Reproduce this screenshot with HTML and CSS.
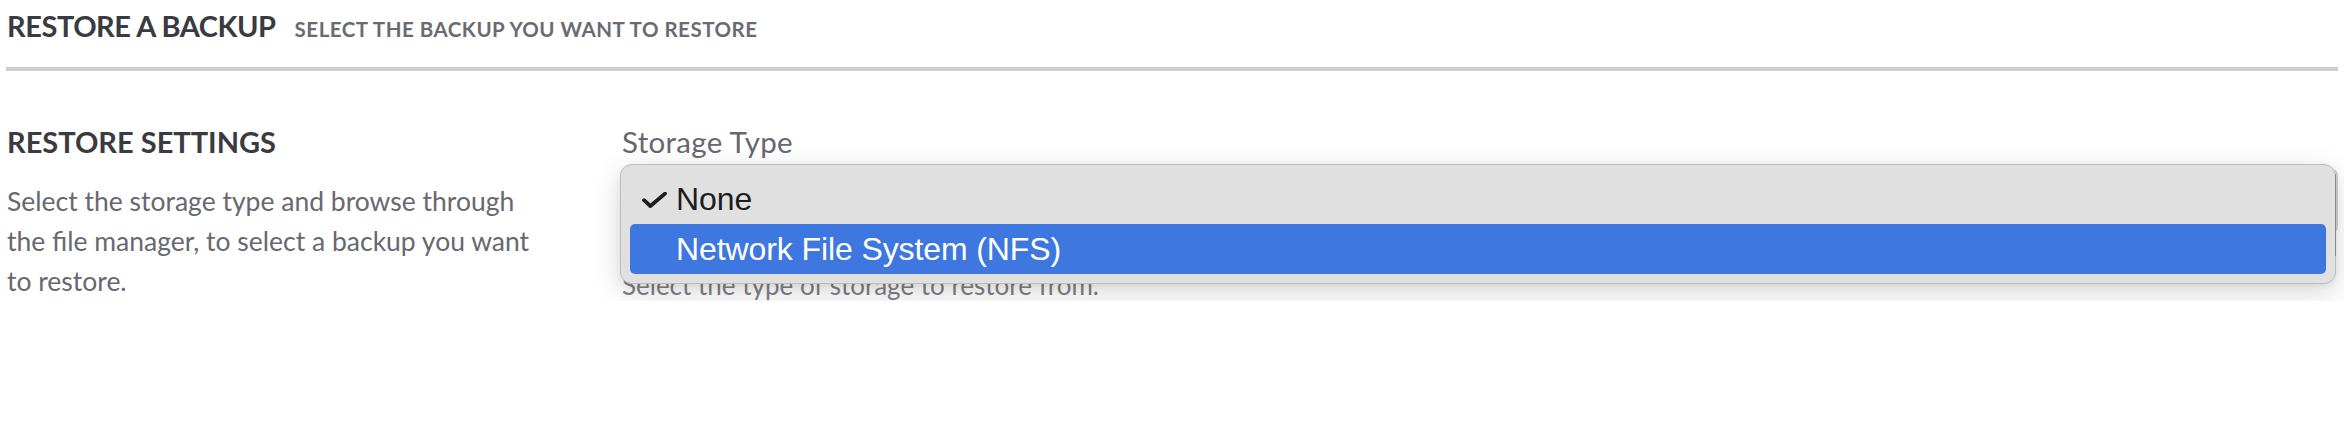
FILE: index.html
```html
<!DOCTYPE html>
<html lang="en">
<head>
<meta charset="utf-8">
<title>Restore a backup</title>
<link rel="stylesheet" href="styles.css">
</head>
<body>
<div class="page">
  <header class="page-header">
    <h1 class="page-title">RESTORE A BACKUP</h1>
    <span class="page-subtitle">SELECT THE BACKUP YOU WANT TO RESTORE</span>
  </header>

  <section class="settings">
    <div class="settings-info">
      <h2 class="settings-title">RESTORE SETTINGS</h2>
      <p class="settings-desc">Select the storage type and browse through the file manager, to select a backup you want to restore.</p>
    </div>

    <div class="settings-form">
      <label class="field-label">Storage Type</label>
      <div class="select-wrap">
        <div class="select-box" aria-hidden="true"></div>
        <ul class="popup-menu">
          <li class="menu-item">
            <span class="check"><svg width="25" height="16" viewBox="0 0 25 16"><path d="M2 8.2 L8.4 14 L23 1.6" fill="none" stroke="#1d1d1f" stroke-width="3.8" stroke-linecap="round" stroke-linejoin="round"/></svg></span>
            <span class="item-text">None</span>
          </li>
          <li class="menu-item is-active">
            <span class="check"></span>
            <span class="item-text">Network File System (NFS)</span>
          </li>
        </ul>
      </div>
      <p class="field-help">Select the type of storage to restore from.</p>
    </div>
  </section>
</div>
</body>
</html>
```

FILE: styles.css
```css
* {
  box-sizing: border-box;
}

html, body {
  margin: 0;
  padding: 0;
  background: #ffffff;
}

body {
  font-family: Lato, "Open Sans", sans-serif;
}

.page {
  padding: 0 6px;
}

/* Header */
.page-header {
  display: flex;
  align-items: baseline;
  gap: 19px;
  padding: 8px 1px 23px;
  border-bottom: 4px solid #cdcdd0;
}

.page-title {
  margin: 0;
  font-size: 29px;
  line-height: 36px;
  font-weight: 700;
  color: #3a3b40;
  letter-spacing: -0.45px;
}

.page-subtitle {
  font-size: 20.5px;
  font-weight: 700;
  color: #6a6b72;
  letter-spacing: 0.5px;
}

/* Settings */
.settings {
  display: grid;
  grid-template-columns: 582px 1fr;
  column-gap: 34px;
  padding-top: 54px;
}

.settings-info {
  padding-left: 1px;
}

.settings-title {
  margin: 0;
  font-size: 29px;
  line-height: 34px;
  font-weight: 700;
  color: #3a3b40;
  letter-spacing: 0;
}

.settings-desc {
  margin: 22px 0 0;
  max-width: 540px;
  font-size: 26.5px;
  line-height: 40px;
  color: #676870;
}

.settings-form {
  display: flex;
  flex-direction: column;
}

.field-label {
  font-size: 29.5px;
  line-height: 34px;
  color: #67686f;
  letter-spacing: 0.3px;
}

.select-wrap {
  position: relative;
  margin-top: 10px;
  height: 64px;
}

.select-box {
  height: 64px;
  border: 2px solid #d5d5d8;
  border-radius: 6px;
}

.popup-menu {
  position: absolute;
  top: -5px;
  left: -2px;
  right: 2px;
  margin: 0;
  padding: 9px;
  list-style: none;
  background: #e0e0e0;
  border: 1px solid #bdbdbd;
  border-radius: 12px;
  box-shadow: 0 8px 28px rgba(0, 0, 0, 0.16), 0 2px 6px rgba(0, 0, 0, 0.06);
  font-family: "Liberation Sans", Arial, sans-serif;
}

.popup-menu::after {
  content: "";
  position: absolute;
  right: -1px;
  top: 9px;
  width: 1px;
  height: 82px;
  background: rgba(0, 0, 0, 0.28);
}

.menu-item {
  display: flex;
  align-items: center;
  height: 50px;
  padding-left: 12px;
  border-radius: 5px;
  font-size: 32px;
  line-height: 50px;
  color: #1d1d1f;
}

.menu-item.is-active {
  background: #3f77e1;
  color: #ffffff;
}

.check {
  display: flex;
  align-items: center;
  width: 34px;
  height: 50px;
  padding-top: 2px;
}

.item-text {
  letter-spacing: -0.1px;
}

.field-help {
  margin: 36px 0 0;
  font-size: 26px;
  line-height: 32px;
  color: #7f8086;
}
```
